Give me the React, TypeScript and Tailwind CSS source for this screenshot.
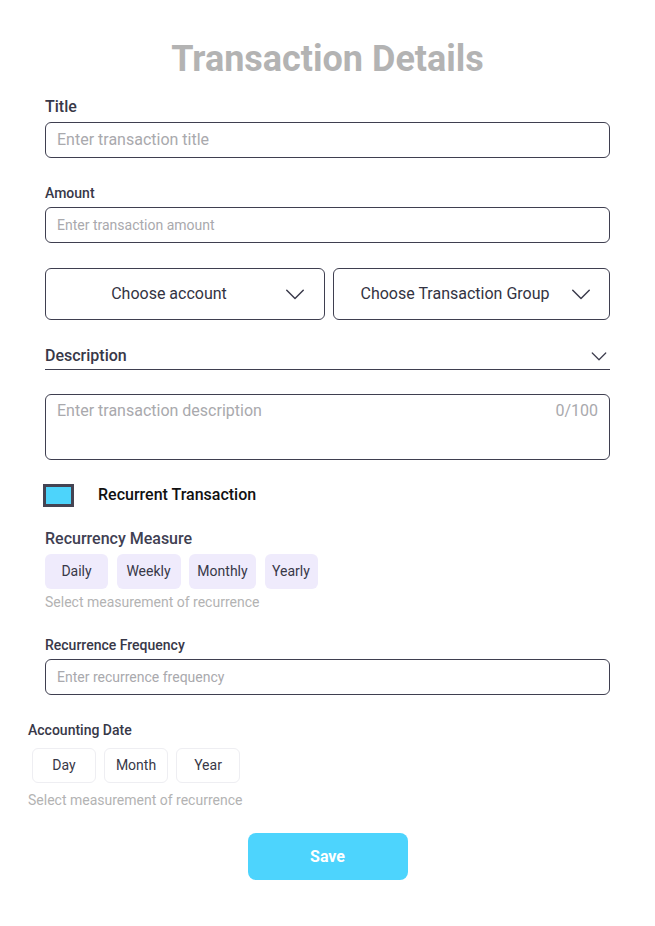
import React from "react";

const Chevron = ({ size = 22 }: { size?: number }) => (
  <svg width={size} height={size} viewBox="0 0 24 24" fill="none" stroke="#3b3b4c" strokeWidth="1.6" strokeLinecap="round" strokeLinejoin="round">
    <path d="M3 8l9 9 9-9" />
  </svg>
);

const TextField = ({ placeholder, big }: { placeholder: string; big?: boolean }) => (
  <div className="h-[36px] rounded-[6px] border border-[#3f3f50] flex items-center px-[11px]">
    <span className={big ? "text-[16px] text-[#a9a9ad]" : "text-[14px] text-[#a9a9ad]"}>{placeholder}</span>
  </div>
);

const measures = [
  { label: "Daily", cls: "w-[63px]" },
  { label: "Weekly", cls: "w-[64px]" },
  { label: "Monthly", cls: "w-[67px]" },
  { label: "Yearly", cls: "w-[53px]" },
];

const App = () => {
  const dates = ["Day", "Month", "Year"];

  return (
    <div className="w-[655px] min-h-[926px] bg-white font-['Roboto',sans-serif] px-[45px]">
      <h1 className="pt-[37px] text-center text-[36px] leading-[44px] font-bold text-[#b3b3b3]">Transaction Details</h1>

      <div className="mt-[16px] text-[16px] leading-[20px] font-medium text-[#383848]">Title</div>
      <div className="mt-[5px]">
        <TextField placeholder="Enter transaction title" big />
      </div>

      <div className="mt-[26px] text-[14px] leading-[18px] font-medium text-[#383848]">Amount</div>
      <div className="mt-[5px]">
        <TextField placeholder="Enter transaction amount" />
      </div>

      <div className="mt-[25px] flex gap-[8px]">
        <div className="flex-1 h-[52px] rounded-[6px] border border-[#3f3f50] flex items-center pl-[18px] pr-[18px]">
          <span className="flex-1 text-center text-[16px] text-[#333342]">Choose account</span>
          <span className="ml-[10px]"><Chevron /></span>
        </div>
        <div className="flex-1 h-[52px] rounded-[6px] border border-[#3f3f50] flex items-center pl-[16px] pr-[17px]">
          <span className="flex-1 text-center text-[16px] text-[#333342]">Choose Transaction Group</span>
          <span className="ml-[10px]"><Chevron /></span>
        </div>
      </div>

      <div className="mt-[26px] pb-[3px] border-b border-[#3f3f50] flex items-center justify-between">
        <span className="text-[16px] leading-[20px] font-medium text-[#383848]">Description</span>
        <span className="mr-[2px]"><Chevron size={18} /></span>
      </div>

      <div className="mt-[24px] h-[66px] rounded-[6px] border border-[#3f3f50] flex justify-between px-[11px] pt-[6px]">
        <span className="text-[16px] leading-[20px] text-[#a9a9ad]">Enter transaction description</span>
        <span className="text-[16px] leading-[20px] text-[#a9a9ad]">0/100</span>
      </div>

      <div className="mt-[23px] flex items-center">
        <div className="w-[31px] h-[23px] -ml-[2px] border-[3px] border-[#444453] bg-[#4dd4fb]" />
        <span className="ml-[24px] text-[16px] font-medium text-[#111]">Recurrent Transaction</span>
      </div>

      <div className="mt-[22px] text-[16px] leading-[20px] font-medium text-[#404052]">Recurrency Measure</div>
      <div className="mt-[5px] flex gap-[8.5px]">
        {measures.map((m) => (
          <div key={m.label} className={`${m.cls} h-[35px] rounded-[6px] bg-[#efebfc] flex items-center justify-center text-[14px] text-[#383848]`}>
            {m.label}
          </div>
        ))}
      </div>
      <div className="mt-[4px] text-[14px] leading-[18px] text-[#b3b3b3]">Select measurement of recurrence</div>

      <div className="mt-[25px] text-[14px] leading-[18px] font-medium text-[#383848]">Recurrence Frequency</div>
      <div className="mt-[5px]">
        <TextField placeholder="Enter recurrence frequency" />
      </div>

      <div className="-ml-[17px]">
        <div className="mt-[26px] text-[14px] leading-[18px] font-medium text-[#383848]">Accounting Date</div>
        <div className="mt-[9px] ml-[4px] flex gap-[8px]">
          {dates.map((d) => (
            <div key={d} className="w-[64px] h-[35px] rounded-[6px] border border-[#eeeef2] flex items-center justify-center text-[14px] text-[#383848]">
              {d}
            </div>
          ))}
        </div>
        <div className="mt-[8px] text-[14px] leading-[18px] text-[#b3b3b3]">Select measurement of recurrence</div>
      </div>

      <div className="mt-[24px] flex justify-center">
        <button className="w-[160px] h-[47px] rounded-[8px] bg-[#4dd4fd] text-white text-[16px] font-bold">Save</button>
      </div>
    </div>
  );
};

export default App;
